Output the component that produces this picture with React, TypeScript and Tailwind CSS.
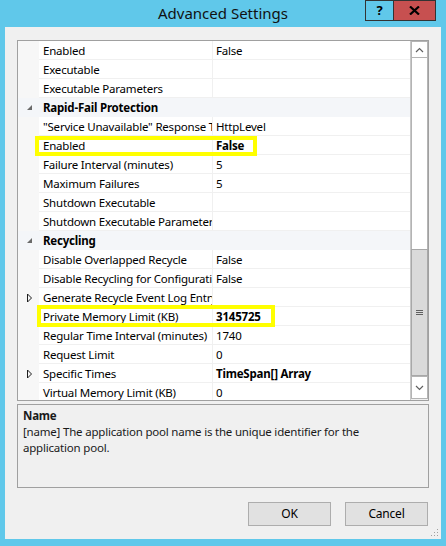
import React from "react";

type Row = {
  label: string;
  value?: string;
  category?: boolean;
  bold?: boolean;
  expander?: boolean;
};

const rows: Row[] = [
  { label: "Enabled", value: "False" },
  { label: "Executable" },
  { label: "Executable Parameters" },
  { label: "Rapid-Fail Protection", category: true },
  { label: '"Service Unavailable" Response Type', value: "HttpLevel" },
  { label: "Enabled", value: "False", bold: true },
  { label: "Failure Interval (minutes)", value: "5" },
  { label: "Maximum Failures", value: "5" },
  { label: "Shutdown Executable" },
  { label: "Shutdown Executable Parameters" },
  { label: "Recycling", category: true },
  { label: "Disable Overlapped Recycle", value: "False" },
  { label: "Disable Recycling for Configuration Changes", value: "False" },
  { label: "Generate Recycle Event Log Entry", expander: true },
  { label: "Private Memory Limit (KB)", value: "3145725", bold: true },
  { label: "Regular Time Interval (minutes)", value: "1740" },
  { label: "Request Limit", value: "0" },
  { label: "Specific Times", value: "TimeSpan[] Array", bold: true, expander: true },
  { label: "Virtual Memory Limit (KB)", value: "0" },
];

function ExpandedGlyph() {
  return (
    <svg width="7" height="7" viewBox="0 0 7 7">
      <path d="M6 1 L6 6 L1 6 Z" fill="#6a6a6a" />
    </svg>
  );
}

function CollapsedGlyph() {
  return (
    <svg width="7" height="10" viewBox="0 0 7 10">
      <path d="M1.5 1 L5.5 5 L1.5 9 Z" fill="none" stroke="#1e1e1e" strokeWidth="1" />
    </svg>
  );
}

function GridRow({ row }: { row: Row }) {
  if (row.category) {
    return (
      <div className="flex h-[19px] bg-[#f4f6f9]">
        <div className="flex w-[21px] items-center justify-center pl-[2px]">
          <ExpandedGlyph />
        </div>
        <div className="flex items-center pl-[4px] pt-[1px] font-bold">{row.label}</div>
      </div>
    );
  }
  return (
    <div className="flex h-[19px]">
      <div className="flex w-[21px] items-center justify-center bg-[#f7f7f7] pl-[2px]">
        {row.expander && <CollapsedGlyph />}
      </div>
      <div className="flex w-[174px] items-center overflow-hidden whitespace-nowrap border-b border-r border-[#f0f0f0] pl-[4px] pt-[1px]">
        {row.label}
      </div>
      <div
        className={`flex flex-1 items-center overflow-hidden whitespace-nowrap border-b border-[#f0f0f0] pl-[3px] pt-[1px] ${
          row.bold ? "font-bold" : ""
        }`}
      >
        {row.value}
      </div>
    </div>
  );
}

function Scrollbar() {
  return (
    <div className="flex w-[18px] flex-col border-l border-[#c8c8c8] bg-[#f0f0f0]">
      <div className="flex h-[17px] items-center justify-center border border-[#b4b4b4] bg-white">
        <svg width="9" height="6" viewBox="0 0 9 6">
          <path d="M1 5 L4.5 1.5 L8 5" fill="none" stroke="#606060" strokeWidth="1.2" />
        </svg>
      </div>
      <div className="h-[191px] border-x border-[#b4b4b4] bg-white" />
      <div className="flex h-[127px] items-center justify-center border border-[#a8a8a8] bg-[#dadada]">
        <div className="flex flex-col gap-[1px]">
          <div className="h-[1px] w-[7px] bg-[#606060]" />
          <div className="h-[1px] w-[7px] bg-[#606060]" />
          <div className="h-[1px] w-[7px] bg-[#606060]" />
        </div>
      </div>
      <div className="flex h-[23px] items-center justify-center border border-[#b4b4b4] bg-white">
        <svg width="9" height="6" viewBox="0 0 9 6">
          <path d="M1 1 L4.5 4.5 L8 1" fill="none" stroke="#606060" strokeWidth="1.2" />
        </svg>
      </div>
    </div>
  );
}

function SizeGrip() {
  return (
    <svg width="8" height="8" viewBox="0 0 8 8">
      <rect x="6" y="0" width="1" height="1" fill="#a0a0a0" />
      <rect x="3" y="3" width="1" height="1" fill="#a0a0a0" />
      <rect x="6" y="3" width="1" height="1" fill="#a0a0a0" />
      <rect x="0" y="6" width="1" height="1" fill="#a0a0a0" />
      <rect x="3" y="6" width="1" height="1" fill="#a0a0a0" />
      <rect x="6" y="6" width="1" height="1" fill="#a0a0a0" />
    </svg>
  );
}

export default function App() {
  return (
    <div
      className="flex h-[546px] w-[446px] flex-col bg-[#60c8ea] text-[11.5px] tracking-[-0.2px] text-[#000]"
      style={{ fontFamily: '"Noto Sans", "Open Sans", sans-serif' }}
    >
      <div className="relative flex h-[27px] items-center justify-center">
        <span className="text-[15px] tracking-normal text-[#111]">Advanced Settings</span>
        <div className="absolute right-[10px] top-0 flex">
          <div className="flex h-[21px] w-[29px] items-center justify-center border border-[#333] bg-[#60c8ea] text-[13px] font-bold">
            ?
          </div>
          <div className="flex h-[21px] w-[42px] items-center justify-center border border-l-0 border-[#333] bg-[#c75050]">
            <svg width="11" height="9" viewBox="0 0 11 9">
              <path d="M1 0.5 L10 8.5 M10 0.5 L1 8.5" stroke="#000" strokeWidth="2.2" />
            </svg>
          </div>
        </div>
      </div>

      <div className="relative mx-[5px] flex h-[512px] flex-col bg-[#f0f0f0] px-[12px] pt-[13px]">
        <div className="relative flex h-[361px] border border-[#a0a0a0] bg-white">
          <div className="flex-1 overflow-hidden">
            {rows.map((row, i) => (
              <GridRow key={i} row={row} />
            ))}
          </div>
          <Scrollbar />
          <div className="pointer-events-none absolute left-[17px] top-[95px] h-[20px] w-[222px] border-[4px] border-[#ffff00]" />
          <div className="pointer-events-none absolute left-[19px] top-[264px] h-[22px] w-[238px] border-[4px] border-[#ffff00]" />
        </div>

        <div className="mt-[3px] h-[84px] border border-[#a0a0a0] px-[5px] pt-[3px] text-[11.5px] leading-[16px] text-[#1a1a1a]">
          <div className="font-bold">Name</div>
          <div className="max-w-[355px]">
            [name] The application pool name is the unique identifier for the application pool.
          </div>
        </div>

        <div className="mt-[14px] flex justify-end gap-[14px] pr-[1px]">
          <button className="h-[24px] w-[83px] border border-[#adadad] bg-[#e1e1e1] text-[12px]">OK</button>
          <button className="h-[24px] w-[83px] border border-[#adadad] bg-[#e1e1e1] text-[12px]">Cancel</button>
        </div>

        <div className="absolute bottom-[2px] right-[2px]">
          <SizeGrip />
        </div>
      </div>
    </div>
  );
}
